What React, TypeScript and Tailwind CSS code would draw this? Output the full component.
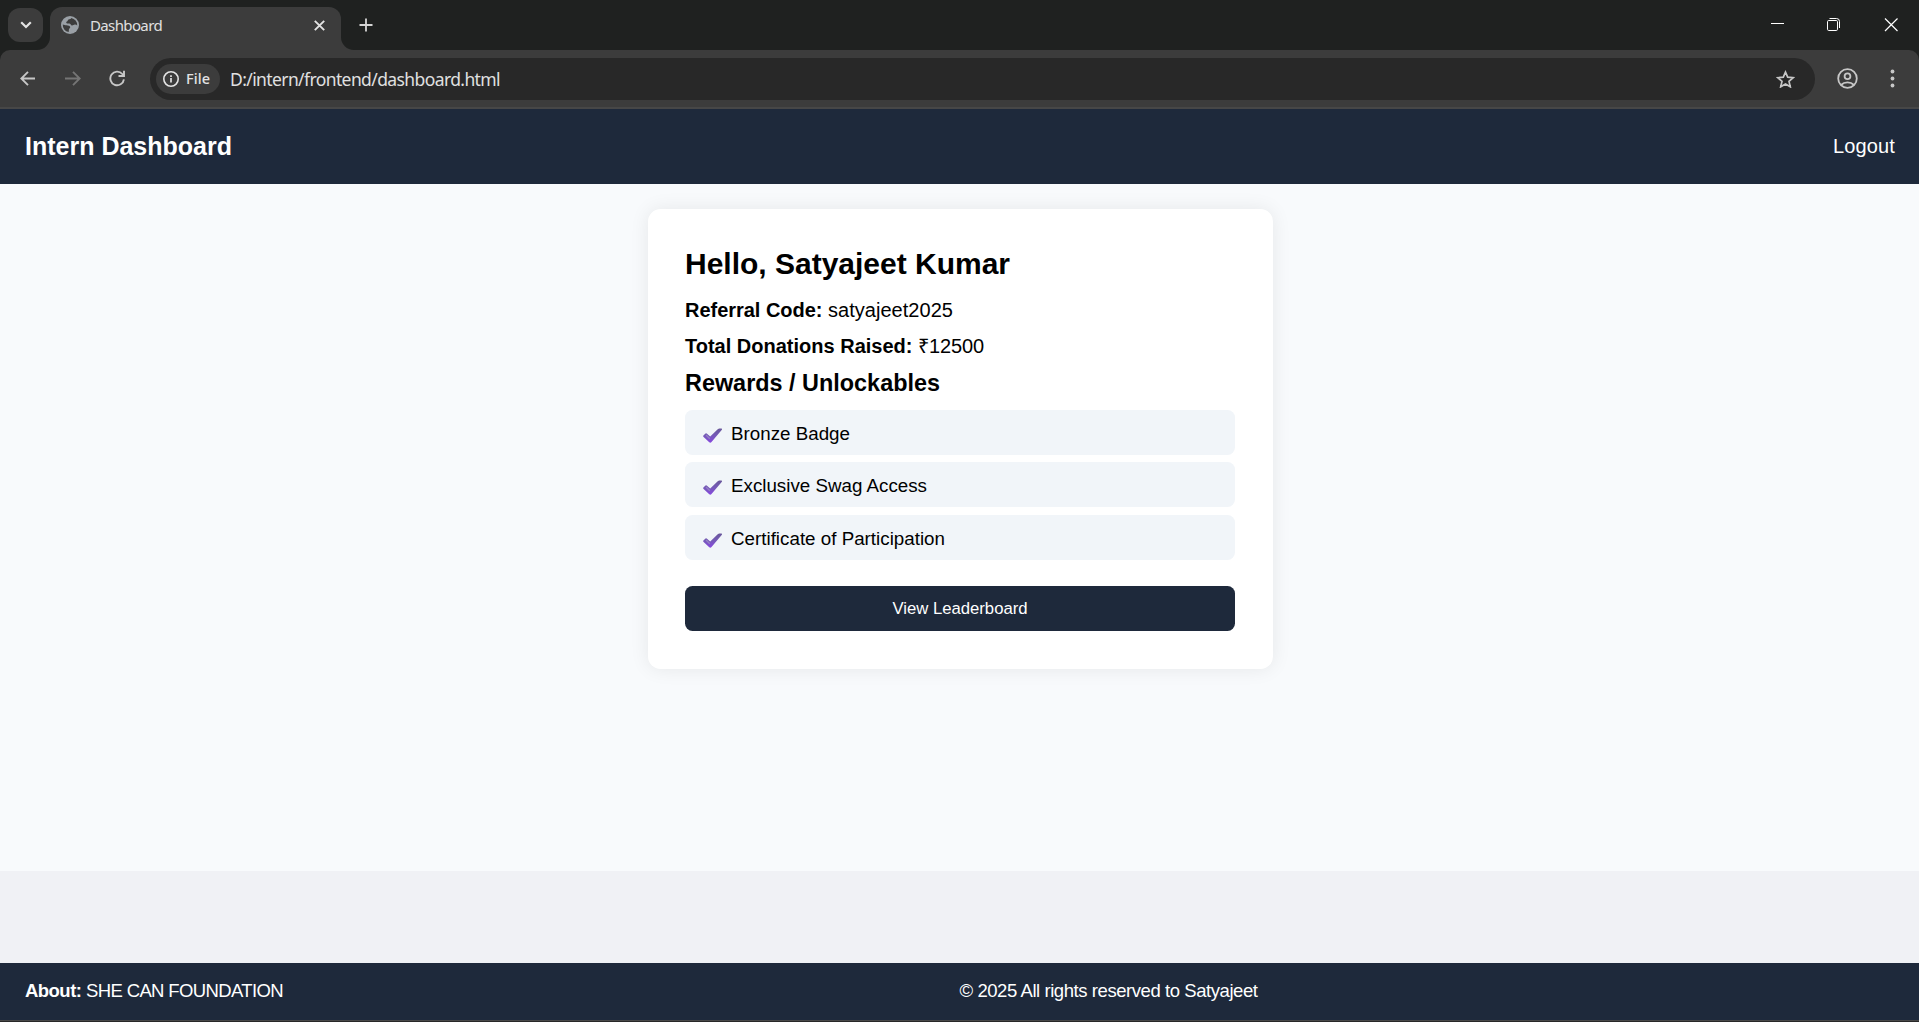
import React from "react";

const ARIAL = "font-['Liberation_Sans',Arial,sans-serif]";

function T({ w, children, className = "" }: { w: number; children: React.ReactNode; className?: string }) {
  const ref = React.useRef<HTMLSpanElement>(null);
  const [sp, setSp] = React.useState(0);
  React.useLayoutEffect(() => {
    const el = ref.current;
    if (!el) return;
    const n = (el.textContent || "").length;
    setSp((w - el.getBoundingClientRect().width) / n);
  }, [w]);
  return (
    <span ref={ref} className={`inline-block whitespace-pre ${className}`} style={{ letterSpacing: `${sp}px` }}>
      {children}
    </span>
  );
}

function TabStrip() {
  return (
    <div className="flex h-[50px] shrink-0 bg-[#1f2120]">
      <div className="mt-2 ml-2 flex h-[34px] w-[35px] items-center justify-center rounded-[12px] bg-[#3c3c3c]">
        <svg width="12" height="8" viewBox="0 0 12 8" fill="none" stroke="#e3e3e3" strokeWidth="2.2">
          <path d="M1.2 1.2 6 6l4.8-4.8" />
        </svg>
      </div>
      <div className="relative mt-[7px] ml-[7px] flex h-[43px] w-[291px] rounded-t-[12px] bg-[#3c3c3c]">
        <svg className="absolute bottom-0 -left-[13px]" width="13" height="13" viewBox="0 0 13 13">
          <path d="M13 0v13H0A13 13 0 0 0 13 0Z" fill="#3c3c3c" />
        </svg>
        <svg className="absolute -right-[13px] bottom-0" width="13" height="13" viewBox="0 0 13 13">
          <path d="M0 0v13h13A13 13 0 0 1 0 0Z" fill="#3c3c3c" />
        </svg>
        <svg className="mt-[9px] ml-[11px]" width="18" height="18" viewBox="0 0 18 18">
          <circle cx="9" cy="9" r="9" fill="#9aa0a6" />
          <path d="M10.2 1.9c-.2 1.300-1.600 1.100-2.700 1.500-1 .4-.5 1.700-1.500 2-.9.3-1 1.400-.3 1.900.8.5 2.400 0 3.300.4 1 .5.900 1.600 1.900 1.700 1.200.1 2-1 3.200-.8.8.1 1.500.6 2.100.8A7.200 7.200 0 0 0 10.200 1.900Z" fill="#3c3c3c" />
          <path d="M1.800 8.400c1 .7 2.600.4 3.800.9 1.500.6 3.400.4 3.600 1.700.2 1-1.100 1.400-1.300 2.500-.1 1-.1 1.900-.2 2.600A7.200 7.200 0 0 1 1.800 8.400Z" fill="#3c3c3c" />
        </svg>
        <div className="mt-[7px] ml-[11px] font-['Noto_Sans','Open_Sans',sans-serif] text-[15px] leading-[22px] text-[#e0e0e0]">
          <T w={72}>Dashboard</T>
        </div>
        <svg className="absolute top-[13px] left-[264px]" width="11" height="11" viewBox="0 0 11 11" stroke="#e3e3e3" strokeWidth="1.900">
          <path d="m.8.800 9.400 9.400M10.200.8.8 10.200" />
        </svg>
      </div>
      <svg className="mt-[18px] ml-[18px]" width="14" height="14" viewBox="0 0 14 14" stroke="#d5d5d5" strokeWidth="1.800">
        <path d="M7 .5v13M.5 7h13" />
      </svg>
      <div className="flex-1" />
      <svg className="mt-[18px]" width="128" height="14" viewBox="0 0 128 14" fill="none" stroke="#fff">
        <path d="M0 5.500h13" />
        <path d="M58.500.5h7a3 3 0 0 1 3 3V10" />
        <rect x="56.500" y="2.500" width="10" height="10" rx="1.200" />
        <path d="m114 .5 12.500 12.500M126.500.5 114 13" strokeWidth="1.200" />
      </svg>
      <div className="w-5" />
    </div>
  );
}

function Toolbar() {
  return (
    <div className="h-[59px] shrink-0 bg-[#1f2120]">
      <div className="flex h-full items-start rounded-t-[10px] border-b-2 border-[#474747] bg-[#3c3c3c]">
        <svg className="mt-[21px] ml-5" width="16" height="15" viewBox="0 0 16 15" fill="none" stroke="#c7c7c7" strokeWidth="1.900">
          <path d="M15 7.500H1.500M8 .8 1.300 7.500 8 14.200" />
        </svg>
        <svg className="mt-[21px] ml-[29px]" width="16" height="15" viewBox="0 0 16 15" fill="none" stroke="#757575" strokeWidth="1.900">
          <path d="M0 7.500h14.500M8 .8l6.700 6.700L8 14.200" />
        </svg>
        <svg className="mt-[20px] ml-[28px]" width="17" height="17" viewBox="0 0 17 17" fill="none" stroke="#c7c7c7" strokeWidth="1.900">
          <path d="M14.900 9.300A6.800 6.800 0 1 1 13.300 4l1.200 1.500" />
          <path d="M15 .8V6H9.500" />
        </svg>
        <div className="mt-2 ml-6 flex h-[42px] w-[1665px] items-center rounded-full bg-[#282828] pl-[6px]">
          <div className="flex h-[30px] w-[64px] items-center rounded-full bg-[#3c3c3c] pl-[7px]">
            <svg width="16" height="16" viewBox="0 0 16 16" fill="none" stroke="#e3e3e3">
              <circle cx="8" cy="8" r="7.200" strokeWidth="1.600" />
              <path d="M8 7v4.500M8 4.300V6" strokeWidth="1.700" />
            </svg>
            <div className="mb-[2px] ml-[7px] font-['Noto_Sans','Open_Sans',sans-serif] text-[14.500px] leading-5 font-medium text-[#e3e3e3]">
              <T w={24}>File</T>
            </div>
          </div>
          <div className="ml-[10px] font-['Noto_Sans','Open_Sans',sans-serif] text-[17.500px] leading-6 text-[#e0e0e0]">
            <T w={270}>D:/intern/frontend/dashboard.html</T>
          </div>
          <div className="flex-1" />
          <svg className="mr-[20px]" width="19" height="18" viewBox="0 0 19 18" fill="none" stroke="#c7c7c7" strokeWidth="1.700">
            <path d="m9.500 2.100 2.200 5.100 5.500.5-4.200 3.700 1.300 5.400-4.800-2.900-4.800 2.900L6 11.400 1.800 7.700l5.500-.5Z" />
          </svg>
        </div>
        <svg className="mt-[18px] ml-[22px]" width="21" height="21" viewBox="0 0 21 21" fill="none" stroke="#c7c7c7" strokeWidth="1.800">
          <circle cx="10.500" cy="10.500" r="9.300" />
          <circle cx="10.500" cy="8.300" r="2.900" />
          <path d="M4 17c3.500-3.600 9.500-3.600 13 0" />
        </svg>
        <svg className="mt-[19px] ml-8" width="5" height="19" viewBox="0 0 5 19" fill="#c7c7c7">
          <circle cx="2.500" cy="2.500" r="1.900" />
          <circle cx="2.500" cy="9.500" r="1.900" />
          <circle cx="2.500" cy="16.500" r="1.900" />
        </svg>
      </div>
    </div>
  );
}

function Check() {
  return (
    <svg width="20" height="16" viewBox="0 0 20 16">
      <defs>
        <linearGradient id="tick" x1="0" y1="0" x2="0" y2="1">
          <stop offset="0" stopColor="#69589a" />
          <stop offset="0.500" stopColor="#7559b8" />
          <stop offset="1" stopColor="#8748e0" />
        </linearGradient>
      </defs>
      <path d="M.4 7.600 2.500 5.600q.8-.5 1.500.1l3.200 2.800L15 1.100q.7-.7 1.600-.6l1.900.1q.9.4.2 1.500L8.500 14q-1.200 1.300-2.500 0L.6 9q-.7-.7-.2-1.400Z" fill="url(#tick)" />
      <path d="m3 7 3.800 3.800" stroke="#9582c4" strokeWidth="1.300" />
    </svg>
  );
}

const rewards = [
  { label: "Bronze Badge", w: 119, gap: "mt-[13px]" },
  { label: "Exclusive Swag Access", w: 196, gap: "mt-[7px]" },
  { label: "Certificate of Participation", w: 214, gap: "mt-[8px]" },
];

export default function App() {
  return (
    <div className={`flex h-[1022px] w-[1919px] flex-col overflow-hidden text-black ${ARIAL}`}>
      <TabStrip />
      <Toolbar />
      <nav className="flex h-[75px] shrink-0 items-center justify-between bg-[#1e293b] pr-6 pb-[2px] pl-[25px] text-white">
        <h1 className="text-[25px] leading-[28px] font-bold"><T w={207}>Intern Dashboard</T></h1>
        <a className="text-[20px] leading-[24px]"><T w={62}>Logout</T></a>
      </nav>
      <main className="h-[687px] shrink-0 bg-[#f8fafc] pt-[25px]">
        <section className="ml-[648px] h-[460px] w-[625px] rounded-[12.500px] bg-white pt-[38px] pr-[38px] pl-[37px] shadow-[0_0_19px_rgba(0,0,0,0.08)]">
          <h2 className="text-[30px] leading-[34px] font-bold"><T w={325}>Hello, Satyajeet Kumar</T></h2>
          <p className="mt-[17px] flex text-[20px] leading-[24px]"><T w={143} className="font-bold">Referral Code: </T><T w={125}>satyajeet2025</T></p>
          <p className="mt-[12px] flex text-[20px] leading-[24px]"><T w={233} className="font-bold">Total Donations Raised: </T><T w={66}>₹12500</T></p>
          <h3 className="mt-[12px] mb-[14px] text-[23.400px] leading-[26px] font-bold"><T w={255}>Rewards / Unlockables</T></h3>
          <ul>
            {rewards.map((r) => (
              <li key={r.label} className={`flex h-[45px] items-start rounded-[7.500px] bg-[#f1f5f9] pl-[18px] first:mt-0 ${r.gap}`}>
                <div className="mt-[18px]"><Check /></div>
                <div className="mt-[13px] ml-[8px] text-[18.750px] leading-[22px]"><T w={r.w}>{r.label}</T></div>
              </li>
            ))}
          </ul>
          <button className="mt-[26px] flex h-[45px] w-full items-center justify-center rounded-[7.500px] bg-[#1e293b] text-[16.700px] text-white">
            <T w={135}>View Leaderboard</T>
          </button>
        </section>
      </main>
      <div className="h-[92px] shrink-0 bg-[#f0f1f5]" />
      <footer className="grid h-[57px] shrink-0 grid-cols-2 bg-[#1e293b] px-[25px] pt-[17px] text-[18.500px] leading-[22px] text-white">
        <p className="flex"><T w={61} className="font-bold">About: </T><T w={197}>SHE CAN FOUNDATION</T></p>
        <p><T w={298}>© 2025 All rights reserved to Satyajeet</T></p>
      </footer>
      <div className="h-[2px] shrink-0 border-t border-[#474747] bg-[#282828]" />
    </div>
  );
}
